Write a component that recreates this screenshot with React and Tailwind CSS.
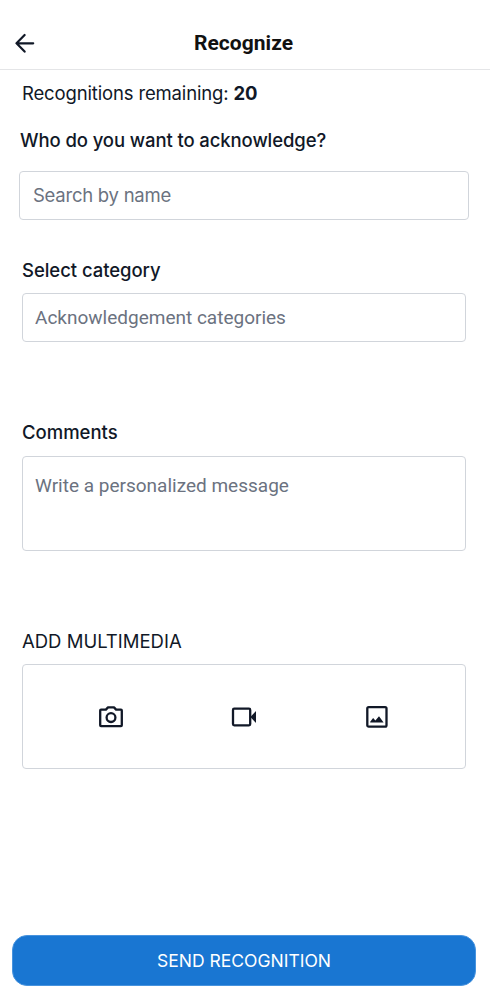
import React, { useState } from "react";

const BackIcon = () => (
  <svg width="20" height="20" viewBox="0 0 20 20" fill="none" stroke="currentColor" strokeWidth="2.2" strokeLinecap="round" strokeLinejoin="round">
    <path d="M18.2 10.3H1.5M9.6 2 1.5 10.3l8.1 8.3" />
  </svg>
);

const CameraIcon = () => (
  <svg width="26" height="24" viewBox="0 0 26 24" fill="none" stroke="currentColor" strokeWidth="2.3" strokeLinejoin="round">
    <path d="M3 4.6h4.9l2.1-2.2h6l2.1 2.2H23q.8 0 .8.8v14.9q0 .8-.8.8H3q-.8 0-.8-.8V5.4q0-.8.8-.8z" />
    <circle cx="13" cy="12.6" r="4.4" />
  </svg>
);

const VideoIcon = () => (
  <svg width="26" height="20" viewBox="0 0 26 20" fill="none">
    <rect x="2" y="1.7" width="17.2" height="16.6" rx="1.2" stroke="currentColor" strokeWidth="2.3" />
    <path d="m19.4 10 5.6-6v12z" fill="currentColor" />
  </svg>
);

const ImageIcon = () => (
  <svg width="24" height="24" viewBox="0 0 24 24" fill="none">
    <rect x="2.3" y="2.2" width="19.2" height="19.4" rx="1.4" stroke="currentColor" strokeWidth="2.3" />
    <path d="M5.2 17.6v-.8l2.9-3.9 2.3 2.7 3.6-4.3 4.6 6.3z" fill="currentColor" />
  </svg>
);

const App = () => {
  const [name, setName] = useState("");
  const [category, setCategory] = useState("");
  const [comments, setComments] = useState("");
  const remaining = 20;

  return (
    <div className="flex flex-col w-full h-[1000px] bg-white text-[#111827] font-['Inter',sans-serif]">
      <header className="grid grid-cols-[60px_1fr_60px] items-center h-[70px] pt-[17px] border-b border-[#e4e5e7]">
        <button aria-label="Back" className="pl-[15px] cursor-pointer">
          <BackIcon />
        </button>
        <h1 className="text-center text-[21px] leading-7 font-bold tracking-[0.05px] text-[#111] font-['Roboto',sans-serif] pr-[3px]">
          Recognize
        </h1>
      </header>

      <main className="flex flex-col flex-1 px-[22px]">
        <p className="mt-[9px] text-[18.5px] leading-7 tracking-[-0.15px]">
          Recognitions remaining: <span className="font-bold">{remaining}</span>
        </p>

        <div className="-ml-[3px] -mr-px mt-[19px]">
          <label htmlFor="name" className="block ml-px text-[18.5px] leading-7 font-medium tracking-[-0.1px]">
            Who do you want to acknowledge?
          </label>
          <input
            id="name"
            type="text"
            placeholder="Search by name"
            value={name}
            onChange={(e) => setName(e.target.value)}
            className="block mt-[17px] w-full h-[49px] px-[13px] pb-0.5 border border-[#d1d5db] rounded text-[18.5px] tracking-[-0.25px] placeholder:text-[#6b7280] outline-0"
          />
        </div>

        <div className="mt-9 mr-0.5">
          <label htmlFor="category" className="block text-[18.5px] leading-7 font-medium tracking-[-0.05px]">
            Select category
          </label>
          <input
            id="category"
            type="text"
            placeholder="Acknowledgement categories"
            value={category}
            onChange={(e) => setCategory(e.target.value)}
            className="block mt-[9px] w-full h-[49px] px-3 border border-[#d1d5db] rounded text-[19px] font-['Roboto',sans-serif] placeholder:text-[#6b7280] outline-0"
          />
        </div>

        <div className="mt-[76px] mr-0.5">
          <label htmlFor="comments" className="block text-[18.5px] leading-7 font-medium">
            Comments
          </label>
          <textarea
            id="comments"
            placeholder="Write a personalized message"
            value={comments}
            onChange={(e) => setComments(e.target.value)}
            className="block mt-[10px] w-full h-[95px] px-3 py-[15px] border border-[#d1d5db] rounded text-[19px] leading-7 font-['Roboto',sans-serif] placeholder:text-[#6b7280] outline-0 resize-none"
          />
        </div>

        <div className="mt-[76px] mr-0.5">
          <h2 className="text-[18.5px] leading-7">ADD MULTIMEDIA</h2>
          <div className="flex items-center justify-between mt-[9px] h-[105px] pl-[75px] pr-[76px] border border-[#d1d5db] rounded">
            <button aria-label="Take a photo" className="cursor-pointer">
              <CameraIcon />
            </button>
            <button aria-label="Record a video" className="mr-0.5 cursor-pointer">
              <VideoIcon />
            </button>
            <button aria-label="Choose an image" className="cursor-pointer">
              <ImageIcon />
            </button>
          </div>
        </div>
      </main>

      <footer className="pl-3 pr-[14px] pb-[14px]">
        <button className="block w-full h-[51px] pt-0.5 rounded-[15px] border border-[#4793de] bg-[#1976d2] text-white text-[17.5px] cursor-pointer">
          SEND RECOGNITION
        </button>
      </footer>
    </div>
  );
};

export default App;
